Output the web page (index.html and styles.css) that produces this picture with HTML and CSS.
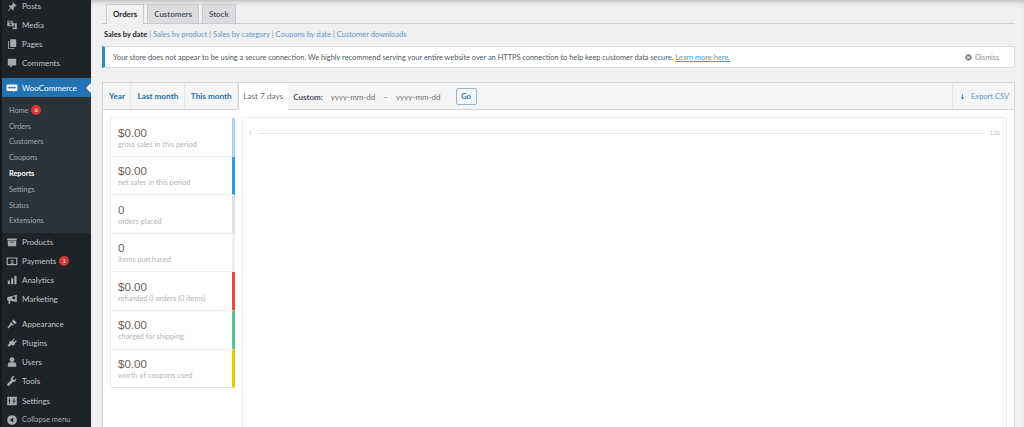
FILE: index.html
```html
<!DOCTYPE html>
<html lang="en">
<head>
    <meta charset="UTF-8">
    <title>Reports - WooCommerce</title>
    <link rel="stylesheet" href="styles.css">
</head>
<body>
    <div class="layout">
        <nav class="sidebar">
            <ul class="menu menu-top">
                <li><svg class="icon" viewBox="0 0 20 20"><path d="M10.4 2.3l7.3 7.3-1.1 1.1-1-.6-3.200 3.200.6 3.300-1 1-3.400-3.400-4.700 4.700-1.100.2.200-1.100 4.700-4.700-3.400-3.400 1-1 3.300.6 3.200-3.200-.6-1z"/></svg>Posts</li>
                <li><svg class="icon" viewBox="0 0 20 20"><path d="M2 3h9v2H9.500L9 4H4.500L4 5H2zM2 6h11v6H2zM7.500 7.200a1.800 1.800 0 1 0 .01 0zM14 7h4v10h-7v-4h3zM14.800 9.500v4.200a1.400 1.400 0 1 1-1-1.300v-1.900z" fill-rule="evenodd"/></svg>Media</li>
                <li><svg class="icon" viewBox="0 0 20 20"><path d="M7 2h10v13H7zM5 5v12h9v1.500H3.500V5z"/></svg>Pages</li>
                <li><svg class="icon" viewBox="0 0 20 20"><path d="M3 3h14v11h-6l-4 4v-4H3z"/></svg>Comments</li>
            </ul>
            <div class="menu-current"><svg class="icon woo" viewBox="0 0 20 20"><path d="M3 4h14a2 2 0 0 1 2 2v7a2 2 0 0 1-2 2h-4l1 2.500-3.500-2.500H3a2 2 0 0 1-2-2V6a2 2 0 0 1 2-2z"/><path class="woo-mark" d="M4 8h3.500v3H4zM8.200 8h3v3h-3zM12 8h4v3h-4z"/></svg>WooCommerce</div>
            <ul class="submenu">
                <li>Home <span class="count count-sub">6</span></li>
                <li>Orders</li>
                <li>Customers</li>
                <li>Coupons</li>
                <li class="active">Reports</li>
                <li>Settings</li>
                <li>Status</li>
                <li>Extensions</li>
            </ul>
            <ul class="menu menu-shop">
                <li><svg class="icon" viewBox="0 0 20 20"><path d="M2 4h16v3H2zM3 8h14v9H3zM7 9.500v1.500h6V9.500z" fill-rule="evenodd"/></svg>Products</li>
                <li><svg class="icon" viewBox="0 0 20 20"><path d="M1 4h18v13H1zM3 6v9h14V6z" fill-rule="evenodd"/><text class="dollar" x="10" y="14.500" text-anchor="middle">$</text></svg>Payments <span class="count">1</span></li>
                <li><svg class="icon" viewBox="0 0 20 20"><path d="M3 11h3.500v6H3zM8.500 7H12v10H8.500zM14 3h3.500v14H14z"/></svg>Analytics</li>
                <li><svg class="icon" viewBox="0 0 20 20"><path d="M18 3v12L7 13v3.500a1.500 1.500 0 0 1-3 0V12.500L2 12V7z"/><circle cx="13" cy="8" r="2.500" fill="#1d2327"/></svg>Marketing</li>
            </ul>
            <ul class="menu menu-site">
                <li><svg class="icon" viewBox="0 0 20 20"><path d="M12 2l6 6-2 1-1 2-5-5 1-2zM8.500 7l4.500 4.500-2.500 1.500-1.500-1-5 5.500-1.500-1.500 4-5.500-.5-1.500z"/></svg>Appearance</li>
                <li><svg class="icon" viewBox="0 0 20 20"><path d="M13 2l1.500 1.500-3 3 2 2 3-3L18 7l-3 3.500-1 3-3 1-2-2-3 3.500H3v-3l3.500-3-2-2 3-1 3-1z"/></svg>Plugins</li>
                <li><svg class="icon" viewBox="0 0 20 20"><circle cx="10" cy="6" r="4"/><path d="M3 18v-4c0-2 2-3.500 4-3.500h6c2 0 4 1.500 4 3.500v4z"/></svg>Users</li>
                <li><svg class="icon" viewBox="0 0 20 20"><path d="M17 5.500l-3 3-2.500-1V5l3-3a5 5 0 0 0-6 6.500L2.500 14.500a2 2 0 0 0 3 3l6-6A5 5 0 0 0 17 5.500z"/></svg>Tools</li>
                <li><svg class="icon" viewBox="0 0 20 20"><path d="M2 3h16v14H2zM5 6v3H4v1.500h1V14h1.500v-3.500h1V9h-1V6zM12.500 6v3.500h-1V11h1v3H14v-3h2V9.500h-2V6z" fill-rule="evenodd"/></svg>Settings</li>
            </ul>
            <div class="collapse"><svg class="icon" viewBox="0 0 20 20"><path d="M10 2a8 8 0 1 0 .01 0zM12 6v8L6.500 10z" fill-rule="evenodd"/></svg>Collapse menu</div>
        </nav>

        <main class="content">
            <div class="tabs">
                <a class="tab tab-active">Orders</a>
                <a class="tab">Customers</a>
                <a class="tab">Stock</a>
            </div>
            <div class="subnav">
                <strong>Sales by date</strong>
                <span class="sep">|</span><a>Sales by product</a>
                <span class="sep">|</span><a>Sales by category</a>
                <span class="sep">|</span><a>Coupons by date</a>
                <span class="sep">|</span><a>Customer downloads</a>
            </div>
            <div class="notice">
                <p>Your store does not appear to be using a secure connection. We highly recommend serving your entire website over an HTTPS connection to help keep customer data secure. <a href="#">Learn more here.</a></p>
                <span class="dismiss"><svg viewBox="0 0 20 20"><path d="M10 1a9 9 0 1 0 .01 0zM6.500 5L10 8.500 13.500 5 15 6.500 11.500 10l3.500 3.500-1.500 1.500L10 11.500 6.500 15 5 13.500 8.500 10 5 6.500z" fill-rule="evenodd"/></svg>Dismiss</span>
            </div>

            <section class="report">
                <div class="report-head">
                    <a class="range">Year</a>
                    <a class="range">Last month</a>
                    <a class="range">This month</a>
                    <a class="range range-active">Last 7 days</a>
                    <div class="custom">
                        <b>Custom:</b>
                        <span>yyyy-mm-dd</span>
                        <span>–</span>
                        <span>yyyy-mm-dd</span>
                        <button>Go</button>
                    </div>
                    <a class="export"><svg viewBox="0 0 20 20"><path d="M9 2h2v11l3-3 1 1-5 6-5-6 1-1 3 3z"/></svg>Export CSV</a>
                </div>
                <div class="report-body">
                    <ul class="legend">
                        <li class="c1"><b>$0.00</b><small>gross sales in this period</small></li>
                        <li class="c2"><b>$0.00</b><small>net sales in this period</small></li>
                        <li class="c3"><b>0</b><small>orders placed</small></li>
                        <li class="c4"><b>0</b><small>items purchased</small></li>
                        <li class="c5"><b>$0.00</b><small>refunded 0 orders (0 items)</small></li>
                        <li class="c6"><b>$0.00</b><small>charged for shipping</small></li>
                        <li class="c7"><b>$0.00</b><small>worth of coupons used</small></li>
                    </ul>
                    <div class="chart">
                        <div class="axis"><span>1</span><i></i><span>1.00</span></div>
                    </div>
                </div>
            </section>
        </main>
    </div>
</body>
</html>
```

FILE: styles.css
```css
html, body {
    margin: 0;
    height: 427px;
    overflow: hidden;
}

body {
    font-family: Lato, "Open Sans", sans-serif;
    font-size: 8px;
    background-color: #f0f0f1;
    color: #3c434a;
}

ul {
    list-style: none;
    margin: 0;
    padding: 0;
}

.layout {
    display: flex;
    height: 427px;
}

/* sidebar */
.sidebar {
    width: 89px;
    flex: none;
    height: 427px;
    overflow: hidden;
    background-color: #1d2327;
    border-left: 2px solid #14181b;
    color: #c3c4c7;
    font-size: 8px;
}

.menu li,
.menu-current,
.collapse {
    display: flex;
    align-items: center;
    height: 19.100px;
    white-space: nowrap;
}

.menu li .count {
    margin-left: 3px;
}

.menu-top {
    margin-top: -3.500px;
}

.icon {
    width: 12px;
    height: 12px;
    margin: 0 4px;
    fill: #a7aaad;
    flex: none;
}

.dollar {
    font: 700 9px "Liberation Sans", sans-serif;
}

.menu-current {
    height: 19px;
    margin-top: 5.500px;
    background-color: #2271b1;
    color: #fff;
    position: relative;
}

.menu-current::after {
    content: "";
    position: absolute;
    right: 0;
    top: 5px;
    border: 5px solid transparent;
    border-left: 0;
    border-right-color: #f0f0f1;
}

.menu-current .icon {
    fill: #fff;
}

.woo-mark {
    fill: #2271b1;
}

.submenu {
    background-color: #2c3338;
    padding: 5.500px 0 3.500px;
    font-size: 7.300px;
    color: #a4a8ad;
}

.submenu li {
    height: 15.800px;
    line-height: 15.800px;
    padding-left: 7px;
    white-space: nowrap;
}

.submenu .active {
    color: #fff;
    font-weight: 700;
}

.count {
    display: inline-block;
    width: 10px;
    height: 10px;
    line-height: 10px;
    border-radius: 50%;
    background-color: #d63638;
    color: #fff;
    font-size: 6px;
    text-align: center;
}

.count-sub {
    margin-left: 1px;
    vertical-align: 1px;
}

.menu-shop {
    margin-top: -0.500px;
}

.menu-site {
    margin-top: 6px;
}

.collapse {
    font-size: 7.500px;
    color: #a7aaad;
}

/* content */
.content {
    flex: 1;
    min-width: 0;
    display: flex;
    flex-direction: column;
    padding: 0 9px 0 11px;
    box-shadow: inset 0 5px 5px -3px rgba(0, 0, 0, 0.22);
}

.tabs {
    display: flex;
    gap: 3px;
    padding: 4px 0 0 4px;
    height: 19px;
    border-bottom: 1px solid #c9cbce;
    font-size: 7.900px;
}

.tab {
    height: 18px;
    line-height: 18px;
    padding: 0 6px;
    background-color: #dcdcde;
    border: 1px solid #c9cbce;
    border-bottom: 0;
    color: #50575e;
    font-weight: 700;
}

.tab-active {
    height: 19px;
    background-color: #f0f0f1;
    color: #1d2327;
}

.subnav {
    margin: 4px 0 5px 2px;
    height: 13px;
    line-height: 13px;
    font-size: 7.500px;
    white-space: nowrap;
    color: #1d2327;
}

.subnav a {
    color: #5a97c9;
}

.sep {
    margin-right: 2px;
    color: #8a8f94;
}

.notice {
    display: flex;
    align-items: center;
    justify-content: space-between;
    flex: none;
    height: 20px;
    padding-left: 8px;
    padding-right: 15px;
    background-color: #fff;
    border: 1px solid #dcdcde;
    border-left: 3px solid #2a8fbf;
    font-size: 7.400px;
    color: #50575e;
    white-space: nowrap;
}

.notice p {
    margin: 0;
}

.notice a {
    color: #5a97c9;
}

.dismiss {
    display: flex;
    align-items: center;
    gap: 3px;
    font-size: 7.200px;
    color: #8c8f94;
}

.dismiss svg {
    width: 7px;
    height: 7px;
    fill: #72777c;
}

/* report box */
.report {
    flex: 1;
    min-height: 0;
    display: flex;
    flex-direction: column;
    margin-top: 14px;
    background-color: #fff;
    border: 1px solid #d5d6d8;
    border-bottom: 0;
}

.report-head {
    display: flex;
    flex: none;
    height: 26px;
    background-color: #f5f5f5;
    border-bottom: 1px solid #d5d6d8;
    font-size: 8.200px;
}

.range {
    padding: 0 5.500px 0 6px;
    line-height: 27px;
    border-right: 1px solid #e6e6e7;
    color: #2271b1;
    font-weight: 700;
    white-space: nowrap;
}

.range-active {
    height: 27px;
    padding: 0 5px 0 4px;
    background-color: #fff;
    color: #6b7076;
    font-weight: 400;
    border-right: 0;
    border-left: 1px solid #d5d6d8;
}

.custom {
    display: flex;
    align-items: center;
    gap: 8px;
    flex: 1;
    padding: 1px 0 0 5px;
    font-size: 8px;
    color: #6b7076;
    white-space: nowrap;
}

.custom b {
    font-weight: 700;
    color: #50575e;
}

.custom button {
    height: 17px;
    width: 21px;
    margin-left: 7px;
    padding: 0;
    background-color: #f6f7f7;
    border: 1px solid #8db6d8;
    border-radius: 2px;
    color: #2271b1;
    font: 700 7.500px Lato, sans-serif;
}

.export {
    display: flex;
    align-items: center;
    gap: 5px;
    padding: 1px 5px 0 6px;
    border-left: 1px solid #e6e6e7;
    font-size: 7.500px;
    color: #5a97c9;
    white-space: nowrap;
}

.export svg {
    width: 7px;
    height: 8px;
    fill: #2271b1;
}

.report-body {
    display: flex;
    flex: 1;
    min-height: 0;
    gap: 7px;
    padding: 7px 7px 0;
}

.legend {
    width: 124px;
    flex: none;
    align-self: flex-start;
    background-color: #fff;
    border-left: 1px solid #eee;
    border-top: 1px solid #f2f2f2;
}

.legend li {
    height: 30.100px;
    padding: 7.500px 0 0 7px;
    border-bottom: 1px solid #eee;
    border-right: 3px solid #ccc;
}

.legend li:last-child {
    border-bottom: 1px solid #e2e2e2;
}

.legend b {
    display: block;
    font: 400 11.600px/14px "Liberation Sans", Arial, sans-serif;
    color: #6b6058;
}

.legend small {
    display: block;
    font-size: 7.400px;
    line-height: 10.500px;
    color: #b4b4b4;
    white-space: nowrap;
}

.c1 { border-right-color: #b1d4ea !important; }
.c2 { border-right-color: #3498db !important; }
.c3 { border-right-color: #dbe1e3 !important; }
.c4 { border-right-color: #ecf0f1 !important; }
.c5 { border-right-color: #e74c3c !important; }
.c6 { border-right-color: #5cc488 !important; }
.c7 { border-right-color: #f1c40f !important; }

.chart {
    flex: 1;
    background-color: #fff;
    border: 1px solid #eee;
    border-bottom: 0;
    border-radius: 3px 3px 0 0;
    padding: 11px 6px 0;
    color: #bdbdbd;
    font-size: 5px;
}

.axis {
    display: flex;
    align-items: center;
    gap: 6px;
    height: 8px;
}

.axis i {
    flex: 1;
    height: 1px;
    background-color: #e6e6e6;
}
```
